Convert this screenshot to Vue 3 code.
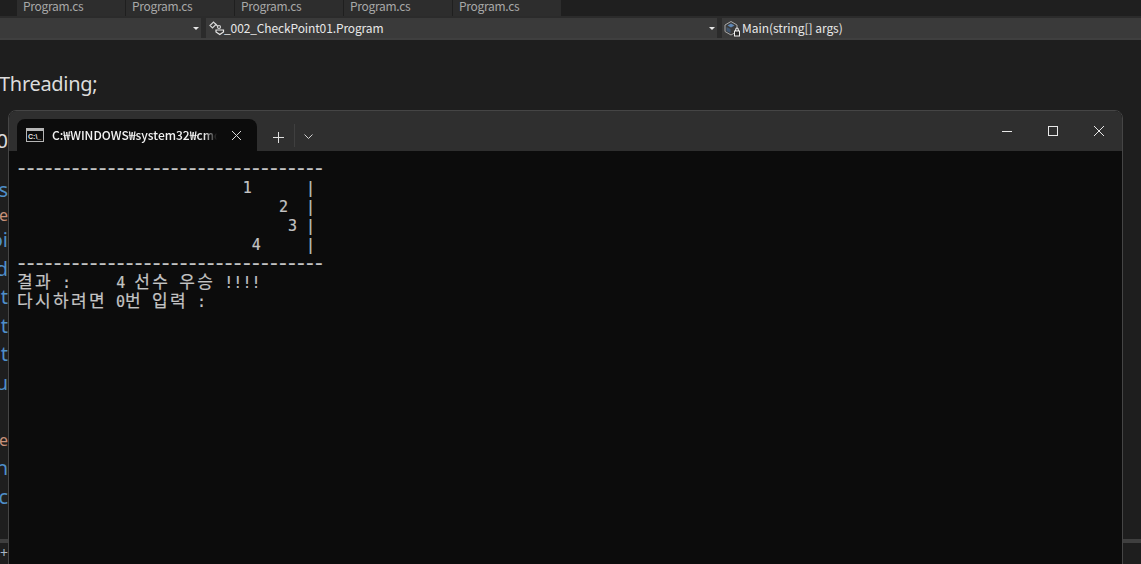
<script setup>
const tabs = [1, 2, 3, 4, 5]
const codeRows = [
  { t: 's', c: 'kw' }, { t: 'e', c: 'str' }, { t: 'oi', c: 'kw' }, { t: 'd', c: 'kw' },
  { t: 't', c: 'kw' }, { t: 't', c: 'kw' }, { t: 't', c: 'kw' }, { t: 'u', c: 'kw' },
  { t: '', c: 'kw' }, { t: 'e', c: 'str' }, { t: 'h', c: 'kw' }, { t: 'c', c: 'kw' }
]
const consoleLines = [
  [{ t: '-'.repeat(34), d: 1 }],
  [{ t: ' '.repeat(25) + '1      |' }],
  [{ t: ' '.repeat(29) + '2  |' }],
  [{ t: ' '.repeat(30) + '3 |' }],
  [{ t: ' '.repeat(26) + '4     |' }],
  [{ t: '-'.repeat(34), d: 1 }],
  [{ t: '결과', k: 1 }, { t: ' :     4 ' }, { t: '선수', k: 1 }, { t: ' ' }, { t: '우승', k: 1 }, { t: ' !!!!' }],
  [{ t: '다시하려면', k: 1 }, { t: ' 0' }, { t: '번', k: 1 }, { t: ' ' }, { t: '입력', k: 1 }, { t: ' :' }]
]
</script>

<template>
  <div class="ide">
    <div class="doc-tabs">
      <div v-for="n in tabs" :key="n" class="doc-tab">Program.cs</div>
    </div>
    <div class="nav">
      <div class="combo first"><span class="caret"></span></div>
      <div class="combo second">
        <svg class="ico" width="17" height="16" viewBox="0 0 17 16" fill="none" stroke="#d4d4d4" stroke-width="1.200">
          <path d="M1 5.500 L4.500 2 L7 4.500 L3.500 8 Z" />
          <path d="M6 3.500 L9 6.500" />
          <circle cx="10" cy="7" r="1.500" />
          <path d="M7 10 h7.500 v2 l-3.700 2.500 l-3.800 -2.500 Z" stroke="#e8e8e8" />
        </svg>
        <span class="combo-text">_002_CheckPoint01.Program</span>
        <span class="caret"></span>
      </div>
      <div class="combo third">
        <svg class="ico" width="17" height="17" viewBox="0 0 17 17" fill="none">
          <path d="M1 5 L7 1.500 L13 5 V11.500 L7 15 L1 11.500 Z" stroke="#a9a9a9" />
          <path d="M3.500 5.500 L7 3.500 L10.500 5.500 L7 7.500 Z" fill="#5f86b3" />
          <path d="M2.500 7 L6.500 9 V13 L2.500 11 Z" fill="#41566f" />
          <rect x="10.500" y="11" width="5" height="5" fill="#2a2a2a" stroke="#f0f0f0" />
          <path d="M11.500 11 V9.500 A1.500 1.500 0 0 1 14.500 9.500 V11" stroke="#f0f0f0" />
        </svg>
        <span class="combo-text main">Main(string[] args)</span>
      </div>
    </div>

    <div class="editor">
      <div class="line using">Threading;</div>
      <div class="line sliver brace">0</div>
      <div class="rows">
        <div v-for="(r, i) in codeRows" :key="i" class="line sliver" :class="r.c">{{ r.t }}</div>
      </div>
    </div>

    <div class="splitter"></div>
    <div class="bottom"><span class="plus">+</span></div>

    <div class="window">
      <div class="titlebar">
        <div class="tab">
          <svg class="cmd" width="18" height="14" viewBox="0 0 18 14">
            <rect x="0.500" y="0.500" width="17" height="13" fill="#0c0c0c" stroke="#b5b5b5" />
            <rect x="1" y="1" width="16" height="2" fill="#b5b5b5" />
            <text x="2" y="10.500" font-size="7" font-family="Liberation Sans, sans-serif" font-weight="700" fill="#e6e6e6">C:\_</text>
          </svg>
          <span class="tab-title">C:₩WINDOWS₩system32₩cmd.exe</span>
          <svg class="tab-close" width="9" height="9" viewBox="0 0 9 9" stroke="#d8d8d8" stroke-width="1">
            <path d="M0 0 L9 9 M9 0 L0 9" />
          </svg>
        </div>
        <svg class="new-tab" width="11" height="11" viewBox="0 0 11 11" stroke="#e0e0e0" stroke-width="1">
          <path d="M5.500 0 V11 M0 5.500 H11" />
        </svg>
        <span class="tb-div"></span>
        <svg class="chev" width="9" height="5" viewBox="0 0 9 5" fill="none" stroke="#d0d0d0" stroke-width="1">
          <path d="M0.500 0.500 L4.500 4.500 L8.500 0.500" />
        </svg>
        <div class="controls">
          <svg width="10" height="10" viewBox="0 0 10 10" stroke="#e8e8e8" stroke-width="1"><path d="M0 5.500 H10" /></svg>
          <svg width="10" height="10" viewBox="0 0 10 10" fill="none" stroke="#e8e8e8" stroke-width="1"><rect x="0.500" y="0.500" width="9" height="9" /></svg>
          <svg width="10" height="10" viewBox="0 0 10 10" stroke="#e8e8e8" stroke-width="1"><path d="M0 0 L10 10 M10 0 L0 10" /></svg>
        </div>
      </div>
      <div class="console">
        <div v-for="(l, i) in consoleLines" :key="i" class="cline" :class="{ 'dash-line': l[0].d }"><span
          v-for="(s, j) in l" :key="j" :class="{ ko: s.k, dash: s.d }">{{ s.t }}</span></div>
      </div>
    </div>
  </div>
</template>

<style>
html, body { margin: 0; height: 100%; overflow: hidden; background: #1e1e1e; }
</style>

<style scoped>
.ide {
  position: relative;
  width: 1141px;
  height: 564px;
  overflow: hidden;
  background: #1e1e1e;
  display: flex;
  flex-direction: column;
  font-family: "Noto Sans CJK KR", "Noto Sans", sans-serif;
}
.doc-tabs {
  height: 16px;
  padding-left: 17px;
  display: flex;
  background: #1f1f1f;
  flex: none;
}
.doc-tab {
  width: 108px;
  margin-right: 1px;
  height: 16px;
  padding-left: 6px;
  box-sizing: border-box;
  background: #2d2d2d;
  color: #a8a8a8;
  font-size: 12px;
  line-height: 11px;
  letter-spacing: -0.3px;
  overflow: hidden;
}
.nav {
  flex: none;
  height: 20px;
  padding: 2px 0;
  background: #2b2b2b;
  display: flex;
  gap: 5px;
  box-shadow: inset 0 -2px 0 #3f3f3f;
}
.combo {
  height: 20px;
  background: #3a3a3a;
  display: flex;
  align-items: center;
  color: #e8e8e8;
  font-size: 12px;
  position: relative;
}
.first { width: 201px; }
.second { width: 511px; padding-left: 3px; box-sizing: border-box; }
.third { flex: 1; padding-left: 2px; }
.ico { flex: none; }
.combo-text { white-space: nowrap; line-height: 18px; letter-spacing: -0.12px; margin-left: -2px; }
.main { margin-left: 1px; letter-spacing: -0.05px; }
.caret {
  position: absolute;
  right: 2px;
  top: 9px;
  border-left: 3px solid transparent;
  border-right: 3px solid transparent;
  border-top: 3px solid #e8e8e8;
}
.editor {
  flex: 1;
  min-height: 0;
  padding-top: 30px;
  font-family: "Noto Sans", sans-serif;
  font-size: 20px;
}
.line { height: 28px; line-height: 28px; white-space: nowrap; }
.using { color: #dcdcdc; margin-left: -1px; letter-spacing: -0.3px; }
.sliver { width: 8px; overflow: hidden; display: flex; justify-content: flex-end; }
.brace { color: #dcdcdc; margin-top: 29px; }
.rows { margin-top: 14px; display: flex; flex-direction: column; }
.rows .line { height: 28.500px; line-height: 28.500px; }
.rows .line:first-child { transform: translateY(7px); }
.rows .line:nth-child(2) { transform: translateY(3px); }
.kw { color: #4f8fc9; }
.str { color: #c8917a; font-size: 16px; }
.splitter { flex: none; height: 4px; background: #3f3f3f; }
.bottom { flex: none; height: 21px; position: relative; font-family: "Noto Sans", sans-serif; }
.plus { color: #a9b6c6; font-size: 14px; line-height: 20px; display: block; width: 8px; overflow: hidden; }

.window {
  position: absolute;
  left: 8px;
  top: 110px;
  width: 1115px;
  height: 470px;
  box-sizing: border-box;
  border: 1px solid #454545;
  border-radius: 8px 8px 0 0;
  background: #0c0c0c;
  display: flex;
  flex-direction: column;
  overflow: hidden;
}
.titlebar {
  flex: none;
  height: 40px;
  background: #2f2f2f;
  display: flex;
  align-items: flex-start;
  box-sizing: border-box;
  padding: 8px 0 0 8px;
}
.tab {
  width: 240px;
  height: 32px;
  background: #0c0c0c;
  border-radius: 8px 8px 0 0;
  display: flex;
  align-items: center;
  box-sizing: border-box;
  padding-left: 9px;
  position: relative;
  flex: none;
}
.cmd { flex: none; }
.tab-title {
  margin-left: 8px;
  margin-top: -2px;
  width: 165px;
  overflow: hidden;
  white-space: nowrap;
  color: #f2f2f2;
  font-size: 12px;
  font-weight: 500;
  letter-spacing: 0;
  -webkit-mask-image: linear-gradient(to right, #000 92%, transparent 100%);
  mask-image: linear-gradient(to right, #000 92%, transparent 100%);
}
.tab-close { margin-left: 15px; flex: none; }
.new-tab { margin: 13px 0 0 16px; flex: none; }
.tb-div { width: 1px; height: 23px; margin: 5px 0 0 10px; background: #3f3f3f; flex: none; }
.chev { margin: 15px 0 0 9px; flex: none; }
.controls {
  margin-left: auto;
  margin-top: 7px;
  width: 102px;
  padding-right: 18px;
  display: flex;
  justify-content: space-between;
  align-items: center;
}
.console {
  flex: 1;
  padding: 9px 0 0 8px;
  font-family: "DejaVu Sans Mono", monospace;
  font-size: 15px;
  line-height: 19px;
  color: #c4c4c4;
  white-space: pre;
  -webkit-text-stroke: 0.2px #c4c4c4;
}
.cline { height: 19px; }
.dash-line { margin-left: -2px; }
.dash {
  font-size: 22px;
  letter-spacing: -4.240px;
  line-height: 0;
  vertical-align: -1px;
}
.ko {
  font-family: "Noto Sans CJK KR", sans-serif;
  font-size: 17px;
  letter-spacing: 2.360px;
  line-height: 0;
}
</style>
